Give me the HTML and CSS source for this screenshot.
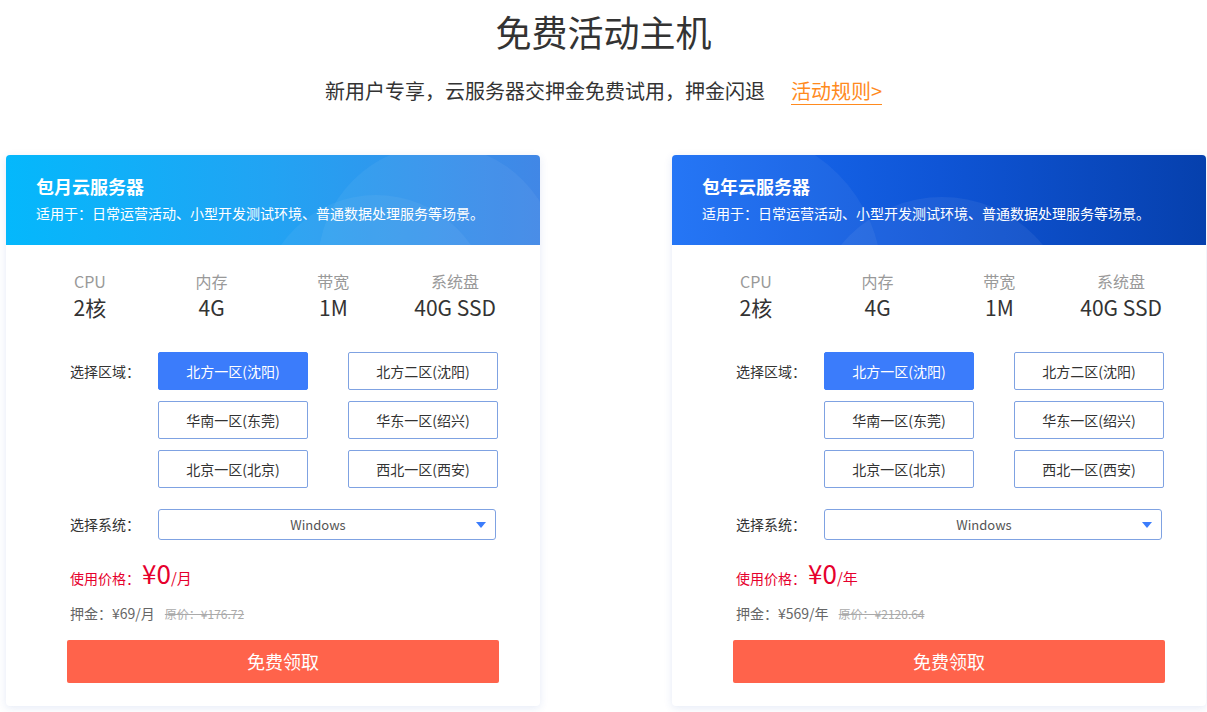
FILE: index.html
```html
<!DOCTYPE html>
<html lang="zh-CN">
<head>
<meta charset="utf-8">
<title>免费活动主机</title>
<link rel="stylesheet" href="styles.css">
</head>
<body>
<div class="page">
  <h1 class="title">免费活动主机</h1>
  <p class="subtitle"><span>新用户专享，云服务器交押金免费试用，押金闪退</span><a class="rules" href="#">活动规则&gt;</a></p>

  <div class="cards">
    <div class="card">
      <div class="card-head head-month">
        <span class="deco deco-a"></span>
        <span class="deco deco-b"></span>
        <h2 class="card-title">包月云服务器</h2>
        <p class="card-desc">适用于：日常运营活动、小型开发测试环境、普通数据处理服务等场景。</p>
      </div>
      <div class="card-body">
        <div class="specs">
          <div class="spec"><div class="spec-label">CPU</div><div class="spec-value">2核</div></div>
          <div class="spec"><div class="spec-label">内存</div><div class="spec-value">4G</div></div>
          <div class="spec"><div class="spec-label">带宽</div><div class="spec-value">1M</div></div>
          <div class="spec"><div class="spec-label">系统盘</div><div class="spec-value">40G SSD</div></div>
        </div>
        <div class="form">
          <div class="row">
            <div class="label">选择区域：</div>
            <div class="regions">
              <div class="region active">北方一区(沈阳)</div>
              <div class="region">北方二区(沈阳)</div>
              <div class="region">华南一区(东莞)</div>
              <div class="region">华东一区(绍兴)</div>
              <div class="region">北京一区(北京)</div>
              <div class="region">西北一区(西安)</div>
            </div>
          </div>
          <div class="row row-os">
            <div class="label">选择系统：</div>
            <div class="select">Windows<span class="caret"></span></div>
          </div>
          <div class="price"><span class="price-label">使用价格：</span><span class="price-num">¥0</span><span class="price-unit">/月</span></div>
          <div class="deposit"><span>押金：¥69/月</span><span class="orig">原价：¥176.72</span></div>
        </div>
        <a class="btn" href="#">免费领取</a>
      </div>
    </div>

    <div class="card">
      <div class="card-head head-year">
        <span class="deco deco-c"></span>
        <span class="deco deco-d"></span>
        <h2 class="card-title">包年云服务器</h2>
        <p class="card-desc">适用于：日常运营活动、小型开发测试环境、普通数据处理服务等场景。</p>
      </div>
      <div class="card-body">
        <div class="specs">
          <div class="spec"><div class="spec-label">CPU</div><div class="spec-value">2核</div></div>
          <div class="spec"><div class="spec-label">内存</div><div class="spec-value">4G</div></div>
          <div class="spec"><div class="spec-label">带宽</div><div class="spec-value">1M</div></div>
          <div class="spec"><div class="spec-label">系统盘</div><div class="spec-value">40G SSD</div></div>
        </div>
        <div class="form">
          <div class="row">
            <div class="label">选择区域：</div>
            <div class="regions">
              <div class="region active">北方一区(沈阳)</div>
              <div class="region">北方二区(沈阳)</div>
              <div class="region">华南一区(东莞)</div>
              <div class="region">华东一区(绍兴)</div>
              <div class="region">北京一区(北京)</div>
              <div class="region">西北一区(西安)</div>
            </div>
          </div>
          <div class="row row-os">
            <div class="label">选择系统：</div>
            <div class="select">Windows<span class="caret"></span></div>
          </div>
          <div class="price"><span class="price-label">使用价格：</span><span class="price-num">¥0</span><span class="price-unit">/年</span></div>
          <div class="deposit"><span>押金：¥569/年</span><span class="orig">原价：¥2120.64</span></div>
        </div>
        <a class="btn" href="#">免费领取</a>
      </div>
    </div>
  </div>
</div>
</body>
</html>
```

FILE: styles.css
```css
* { box-sizing: border-box; }
html, body { margin: 0; padding: 0; background: #fff; }
body {
  font-family: "Noto Sans CJK SC", "Noto Sans", sans-serif;
  color: #333;
  width: 1207px;
  height: 712px;
  overflow: hidden;
}
.page { padding-top: 6px; }
.title {
  margin: 0;
  font-size: 36px;
  font-weight: 400;
  line-height: 50px;
  text-align: center;
  color: #333;
}
.subtitle {
  margin: 20px 0 0;
  font-size: 20px;
  line-height: 30px;
  height: 30px;
  text-align: center;
  color: #333;
  display: flex;
  justify-content: center;
  align-items: center;
}
.rules {
  margin-left: 26px;
  color: #ff8a1e;
  text-decoration: none;
  line-height: 26px;
  display: inline-block;
  border-bottom: 1px solid #ff8a1e;
}
.cards {
  margin-top: 49px;
  display: flex;
  justify-content: space-between;
  padding: 0 1px 0 6px;
}
.card {
  width: 534px;
  background: #fff;
  border-radius: 4px;
  box-shadow: 0 2px 8px rgba(40, 80, 180, 0.12);
  overflow: hidden;
}
.card-head {
  position: relative;
  height: 90px;
  padding: 19px 31px 0 30px;
  color: #fff;
  overflow: hidden;
}
.head-month { background: linear-gradient(90deg, #04b8fc 0%, #22a3f3 50%, #4187e6 100%); }
.head-year { background: linear-gradient(90deg, #1a6ff6 0%, #0f55d6 50%, #0640ad 100%); }
.deco {
  position: absolute;
  border-radius: 50%;
  background: rgba(255, 255, 255, 0.05);
}
.deco-a { width: 240px; height: 240px; left: 312px; top: -10px; }
.deco-b { width: 230px; height: 230px; left: 255px; top: 40px; }
.deco-c { width: 300px; height: 300px; left: -90px; top: -25px; }
.deco-d { width: 260px; height: 260px; left: 140px; top: 42px; background: rgba(255,255,255,0.06); }
.card-title {
  position: relative;
  margin: 0;
  font-size: 18px;
  font-weight: 700;
  line-height: 24px;
}
.card-desc {
  position: relative;
  margin: 5px 0 0;
  font-size: 14px;
  line-height: 20px;
}
.card-body { padding: 26px 41px 23px 61px; }
.specs {
  display: grid;
  grid-template-columns: repeat(4, 1fr);
  margin: 0 -17px 0 -38px;
  text-align: center;
}
.spec-label { font-size: 16px; line-height: 20px; color: #999; }
.spec-value { font-size: 21px; line-height: 32px; color: #333; }
.form { margin-top: 29px; padding-left: 3px; }
.row { display: flex; align-items: flex-start; }
.label {
  width: 88px;
  flex: none;
  font-size: 14px;
  line-height: 38px;
  color: #333;
}
.regions {
  display: grid;
  grid-template-columns: 150px 150px;
  column-gap: 40px;
  row-gap: 11px;
}
.region {
  height: 38px;
  border: 1px solid #7fa2e2;
  border-radius: 2px;
  font-size: 14px;
  line-height: 37px;
  text-align: center;
  color: #333;
  background: #fff;
}
.region.active {
  background: #3b7cfb;
  border-color: #3b7cfb;
  color: #fff;
}
.row-os { margin-top: 21px; align-items: center; }
.row-os .label { line-height: 31px; }
.select {
  position: relative;
  width: 338px;
  height: 31px;
  padding-right: 18px;
  border: 1px solid #7fa2e2;
  border-radius: 3px;
  font-size: 13px;
  line-height: 29px;
  text-align: center;
  color: #555;
}
.caret {
  position: absolute;
  right: 9px;
  top: 12px;
  width: 0;
  height: 0;
  border-left: 5px solid transparent;
  border-right: 5px solid transparent;
  border-top: 6px solid #3b7cfb;
}
.price {
  margin-top: 15px;
  height: 36px;
  display: flex;
  align-items: baseline;
  color: #e6002d;
  line-height: 36px;
}
.price-label { font-size: 14px; }
.price-num { font-size: 26px; margin-left: 2px; }
.price-unit { font-size: 15px; }
.deposit {
  margin-top: 12px;
  height: 20px;
  display: flex;
  align-items: baseline;
  font-size: 14px;
  line-height: 20px;
  color: #666;
}
.orig {
  margin-left: 10px;
  font-size: 12px;
  color: #aaa;
  text-decoration: line-through;
}
.btn {
  display: block;
  margin: 17px 0 0;
  width: 432px;
  height: 43px;
  border-radius: 2px;
  background: #ff634b;
  color: #fff;
  font-size: 18px;
  line-height: 43px;
  text-align: center;
  text-decoration: none;
}
```
